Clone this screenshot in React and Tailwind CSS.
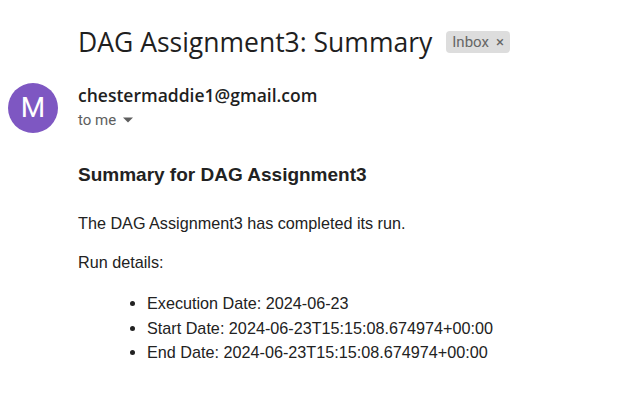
export default function App() {
  return (
    <div className="min-h-screen w-[618px] bg-white text-[#222]">
      <div className="flex items-center gap-[14px] pl-[78px] pt-[25px]">
        <h1 className="font-['Open_Sans',sans-serif] text-[26.5px] leading-[34px] text-[#1f1f1f]">
          DAG Assignment3: Summary
        </h1>
        <span className="flex h-[22px] items-center gap-[7px] rounded-[4px] bg-[#dddddd] px-[6px] font-['Roboto',sans-serif] text-[15px] text-[#666]">
          Inbox <span className="text-[15px] leading-none">×</span>
        </span>
      </div>

      <div className="mt-[24px] flex">
        <div className="ml-[8px] mr-[20px] flex h-[50px] w-[50px] items-center justify-center rounded-full bg-[#7e57c2] font-['Roboto',sans-serif] text-[28px] text-white">
          M
        </div>
        <div className="pt-[2px]">
          <div className="font-['Open_Sans',sans-serif] text-[17.5px] font-semibold leading-[20px] text-[#1f1f1f]">
            chestermaddie1@gmail.com
          </div>
          <div className="mt-[5px] flex items-center gap-[7px] font-['Roboto',sans-serif] text-[15px] leading-[20px] text-[#5e5e5e]">
            to me
            <svg width="10" height="6" viewBox="0 0 10 5">
              <path d="M0 0 L10 0 L5 5 Z" fill="#5e5e5e" />
            </svg>
          </div>
        </div>
      </div>

      <div className="pl-[78px] pt-[30px] font-['Liberation_Sans',Arial,sans-serif] text-[#222]">
        <h2 className="text-[19px] font-bold leading-[24px]">Summary for DAG Assignment3</h2>
        <p className="mt-[25px] text-[16.2px] leading-[22px]">The DAG Assignment3 has completed its run.</p>
        <p className="mt-[17px] text-[16.2px] leading-[22px]">Run details:</p>
        <ul className="mt-[18px] list-disc pl-[69px] text-[16.2px] leading-[24.5px]">
          <li>Execution Date: 2024-06-23</li>
          <li>Start Date: 2024-06-23T15:15:08.674974+00:00</li>
          <li>End Date: 2024-06-23T15:15:08.674974+00:00</li>
        </ul>
      </div>
    </div>
  )
}
